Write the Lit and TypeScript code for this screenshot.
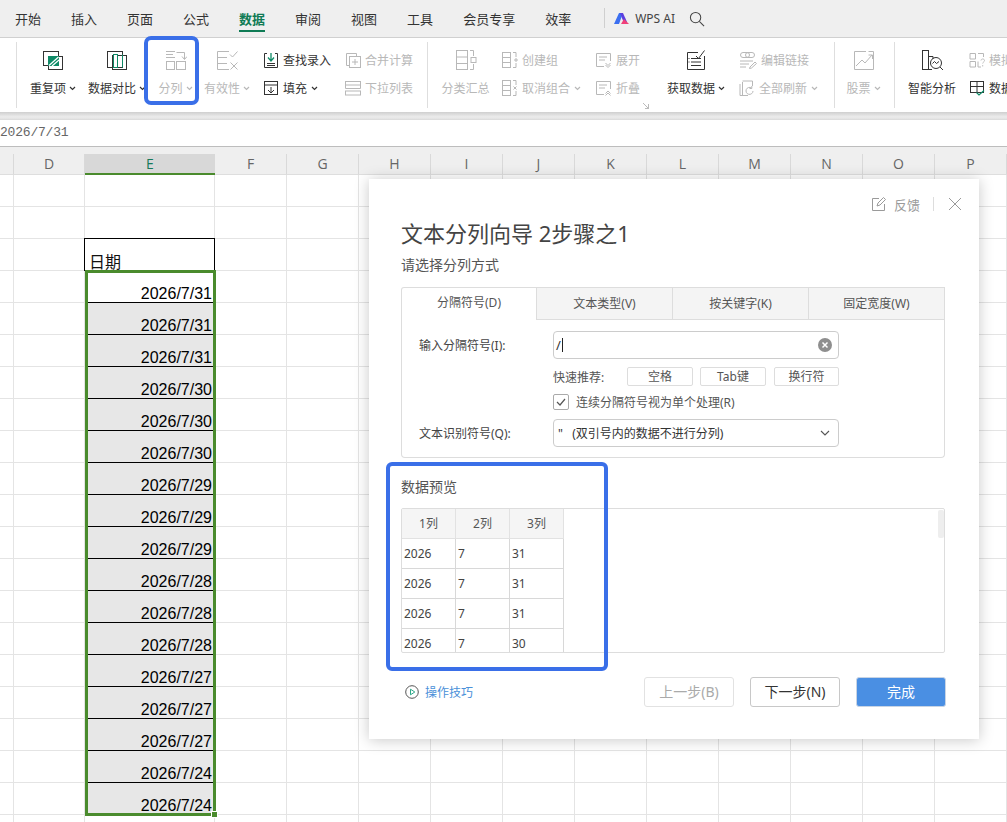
import { LitElement, html, css, svg, nothing } from "lit";
import { customElement } from "lit/decorators.js";

const G = "#0e8a66";

const ic = (size: number, body: unknown) =>
  html`<svg class="ic" width=${size} height=${size} viewBox="0 0 ${size} ${size}" fill="none" stroke="currentColor" stroke-width="1">${body}</svg>`;

const ICONS: Record<string, unknown> = {
  repeat: ic(22, svg`<rect x="1.5" y="2.5" width="15" height="14"/><rect x="6.5" y="7.5" width="14" height="13"/><rect x="6.5" y="7.5" width="10" height="9" fill="${G}" stroke="${G}"/><path d="M7 16.5L16.5 8M10 17L17 11" stroke="#fff" stroke-width="1.2"/>`),
  compare: ic(22, svg`<rect x="1.5" y="2.5" width="15" height="16"/><rect x="6.5" y="6.5" width="14" height="14"/><rect x="7.5" y="5.5" width="4" height="13" stroke="${G}" fill="#fff"/><path d="M16.5 5.5v13" stroke="${G}"/>`),
  split: ic(22, svg`<path d="M1 2.5H10M1 5.5H8M1 8.5H10M11.5 3.5H19.5V10"/><path d="M17 7.5L19.5 10.5L22 7.5"/><rect x="1.5" y="12.5" width="8" height="8"/><rect x="11.5" y="12.5" width="9" height="8"/>`),
  valid: ic(22, svg`<path d="M13 2.5H1.5V20.5H13M1.5 8.5H11M1.5 14.5H11"/><path d="M14 5.5L16.5 8L21.5 2.5"/><path d="M14.5 13.5L21.5 20.5M21.5 13.5L14.5 20.5"/>`),
  find: ic(16, svg`<path d="M4 1.5H1.5V15.5H14.5V1.5H12"/><path d="M4 11.5H12M4 13.5H12" stroke-width="1"/><path d="M8 1V8M5 5.5L8 9L11 5.5" stroke="${G}" stroke-width="1.3"/>`),
  fill: ic(16, svg`<rect x="1.5" y="1.5" width="13" height="13"/><path d="M1.5 5H14.5M8 7V13M5 10L8 13L11 10"/>`),
  merge: ic(16, svg`<path d="M4.5 13.5H1.5V1.5H11.5V4"/><rect x="4.5" y="4.5" width="11" height="11"/><path d="M10 7V13M7 10H13"/>`),
  drop: ic(16, svg`<rect x="0.5" y="1.5" width="15" height="3.5"/><path d="M0.5 5V8.5H15.5V5"/><rect x="0.5" y="11" width="15" height="4"/>`),
  subtotal: ic(22, svg`<rect x="1.5" y="1.5" width="11" height="19"/><path d="M1.5 8H12.5M1.5 14.5H12.5"/><path d="M15 1.5H18.5V7M18.5 15V20.5H15"/><rect x="16" y="8.5" width="5" height="5"/>`),
  group: ic(16, svg`<rect x="0.5" y="0.5" width="8" height="15"/><path d="M0.5 5.5H8.5M0.5 10.5H8.5M11 0.5H14V5M14 11V15.5H11"/><path d="M14 6V10M12 8H16"/>`),
  ungroup: ic(16, svg`<rect x="0.5" y="0.5" width="8" height="15"/><path d="M0.5 5.5H8.5M0.5 10.5H8.5M11 0.5H14V5M14 11V15.5H11"/><path d="M11.5 6.5L14.5 9.5M14.5 6.5L11.5 9.5"/>`),
  expand: ic(16, svg`<path d="M8 14.5H0.5V1.5H14.5V9"/><path d="M3 5H11M3 8H9"/><path d="M9.5 11L12 13.5L14.5 11M9.5 13L12 15.5L14.5 13"/>`),
  fold: ic(16, svg`<path d="M8 14.5H0.5V1.5H14.5V9"/><path d="M3 5H11M3 8H9"/><path d="M9.5 13.5L12 11L14.5 13.5M9.5 15.5L12 13L14.5 15.5"/>`),
  getdata: ic(22, svg`<path d="M13 3.5H2.5V20.5H19.5V7"/><path d="M6 9.5H16M6 13H16M6 16.5H16M3.5 9.5H4.5M3.5 13H4.5" /><path d="M11 7L13.5 9.5L19.5 1.5" stroke="#333"/>`),
  link: ic(18, svg`<rect x="1.5" y="1.5" width="9" height="5" rx="2.5"/><rect x="6.5" y="1.5" width="9" height="5" rx="2.5"/><path d="M1 10H14M1 13H10M1 16H7"/><path d="M11 16L16 11L17.5 12.5L12.5 17L10.5 17.5Z"/>`),
  refresh: ic(16, svg`<path d="M3.5 2V15.5M1 4V15.5H9M3.5 1H13.5V6"/><path d="M14 11A3.5 3.5 0 1 1 12.5 8M12.8 6V8.5H10.5"/>`),
  stock: ic(22, svg`<path d="M13 2.5H1.5V20.5H20.5V2.5H15.5"/><path d="M3 17L9 11L12 14L19 6"/><path d="M15.5 6H19.5V10" />`),
  smart: ic(22, svg`<rect x="1.5" y="1.5" width="6" height="19"/><path d="M7.5 7.5H12V10M7.5 20.5H11"/><circle cx="15" cy="14" r="5.5"/><path d="M11.5 14.5L13.5 12.5L15.5 14.5L18 12.5M19 18L22 21"/>`),
  sim: ic(16, svg`<path d="M1 1.5H6.5V7H1ZM9 1.5H14.5V5M1 9.5H6.5V15H1Z" stroke-dasharray="none"/><path d="M9 9.5V15H12"/><path d="M12 8.5C12 6.5 15.5 6.5 15.5 8.5C15.5 10 13.7 10 13.7 11.5M13.7 13V14.5" stroke-width="0.9"/>`),
  check: ic(16, svg`<rect x="1.5" y="1.5" width="13" height="11"/><path d="M1.5 6.5H14.5M8 1.5V12.5" /><path d="M7.5 12.5L10 15L15 10.5" stroke="${G}" stroke-width="1.2"/>`),
};

type Small = { i: string; t: string; arrow?: boolean; off?: boolean };
type Item =
  | { k: "sep" }
  | { k: "gap"; w: number }
  | { k: "big"; w: number; i: string; t: string; off?: boolean; arrow?: boolean }
  | { k: "small"; w: number; rows: Small[] };

const RIBBON: Item[] = [
  { k: "gap", w: 16 }, { k: "sep" }, { k: "gap", w: 9 },
  { k: "big", w: 54, i: "repeat", t: "重复项", arrow: true },
  { k: "gap", w: 5 },
  { k: "big", w: 64, i: "compare", t: "数据对比", arrow: true },
  { k: "gap", w: 1 },
  { k: "big", w: 51, i: "split", t: "分列", arrow: true, off: true },
  { k: "big", w: 52, i: "valid", t: "有效性", arrow: true, off: true },
  { k: "gap", w: 10 },
  { k: "small", w: 82, rows: [{ i: "find", t: "查找录入" }, { i: "fill", t: "填充", arrow: true }] },
  { k: "small", w: 82, rows: [{ i: "merge", t: "合并计算", off: true }, { i: "drop", t: "下拉列表", off: true }] },
  { k: "sep" }, { k: "gap", w: 6 },
  { k: "big", w: 63, i: "subtotal", t: "分类汇总", off: true },
  { k: "gap", w: 5 },
  { k: "small", w: 94, rows: [{ i: "group", t: "创建组", off: true }, { i: "ungroup", t: "取消组合", arrow: true, off: true }] },
  { k: "small", w: 66, rows: [{ i: "expand", t: "展开", off: true }, { i: "fold", t: "折叠", off: true }] },
  { k: "big", w: 68, i: "getdata", t: "获取数据", arrow: true },
  { k: "gap", w: 9 },
  { k: "small", w: 95, rows: [{ i: "link", t: "编辑链接", off: true }, { i: "refresh", t: "全部刷新", arrow: true, off: true }] },
  { k: "sep" },
  { k: "big", w: 57, i: "stock", t: "股票", arrow: true, off: true },
  { k: "gap", w: 2 }, { k: "sep" }, { k: "gap", w: 5 },
  { k: "big", w: 64, i: "smart", t: "智能分析" },
  { k: "gap", w: 5 },
  { k: "small", w: 60, rows: [{ i: "sim", t: "模拟", off: true }, { i: "check", t: "数据" }] },
];

const TABS = ["开始", "插入", "页面", "公式", "数据", "审阅", "视图", "工具", "会员专享", "效率"];
const COLS = ["", "D", "E", "F", "G", "H", "I", "J", "K", "L", "M", "N", "O", "P"];
const DATES = ["31", "31", "31", "30", "30", "30", "29", "29", "29", "28", "28", "28", "27", "27", "27", "24", "24"];
const PREVIEW = [["2026", "7", "31"], ["2026", "7", "31"], ["2026", "7", "31"], ["2026", "7", "30"]];

const chevron = html`<svg class="chev" width="7" height="5" viewBox="0 0 7 5" fill="none" stroke="currentColor" stroke-width="1.2"><path d="M1 1L3.5 3.5L6 1"/></svg>`;

@customElement("app-root")
export class AppRoot extends LitElement {
  static styles = css`
    :host { display: block; width: 1007px; height: 822px; position: relative; overflow: hidden; background: #fff;
      font-family: "Noto Sans", "Noto Sans CJK SC", sans-serif; font-size: 12px; color: #333; }
    * { box-sizing: border-box; }
    .tabs { height: 38px; background: #efefef; border-bottom: 1px solid #d0d0d0; display: flex; align-items: flex-start; padding-left: 15px; gap: 30px; font-size: 13px; color: #333; }
    .tab { height: 32px; line-height: 37px; font-family: "Noto Sans CJK SC", sans-serif; }
    .tab.on { color: #0f7b55; font-weight: 700; border-bottom: 2px solid #0f7b55; }
    .ai { display: flex; align-items: center; height: 37px; margin-left: 3px; gap: 6px; color: #444; font-size: 12px; }
    .vsep { width: 1px; height: 20px; background: #cfcfcf; margin-top: -1px; margin-right: 3px; }
    .search { margin-left: 8px; color: #444; }
    .ribbon { height: 74px; background: #fff; display: flex; padding-top: 8px; position: relative; overflow: hidden; white-space: nowrap; }
    .sep { width: 1px; height: 66px; margin-top: -4px; background: #dedede; flex: none; }
    .big, .small { flex: none; }
    .big { display: flex; flex-direction: column; align-items: center; }
    .off { color: #b8b8b8; }
    .bigic { height: 28px; display: flex; align-items: center; justify-content: center; }
    .lab { height: 28px; display: flex; align-items: center; gap: 3px; }
    .row { height: 28px; display: flex; align-items: center; gap: 4px; }
    .chev { margin-left: 0; flex: none; }
    .launch { position: absolute; left: 643px; top: 65px; color: #bbb; }
    .shade { height: 8px; background: linear-gradient(#cfcfcf, #ececec 70%, #e2e2e2); border-bottom: 1px solid #ddd; }
    .fx { height: 27px; background: #fff; border-bottom: 1px solid #bdbdbd; font-family: "Liberation Mono", monospace; font-size: 13px; letter-spacing: -0.2px; color: #666; line-height: 25px; }
    .grid { display: grid; grid-template-columns: 14px 71px 130px repeat(11, 72px); }
    .hd { background: #efefef; padding-top: 7px; }
    .hc { height: 21px; border-right: 1px solid #d9d9d9; border-bottom: 1px solid #dedede; text-align: center; font: 14px/20px "Open Sans", sans-serif; color: #666; }
    .hc.on { background: #d8d8d8; color: #17795a; border-bottom: 2px solid #4a8b2d; border-right: none; }
    .c { height: 32px; border-right: 1px solid #e4e4e4; border-bottom: 1px solid #e4e4e4; }
    .c.h { border-right-color: #000; box-shadow: -1px 0 0 #000, 0 -1px 0 #000, -1px -1px 0 #000; font: 16px/18px "Noto Sans CJK SC", sans-serif; color: #111; padding: 13px 0 0 4px; }
    .c.d { border-bottom-color: #000; text-align: right; padding: 14px 2px 0 0; font: 16px/17px "Liberation Sans", sans-serif; color: #000; }
    .c.gray { background: #e7e7e7; }
    .sel { position: absolute; left: 85px; top: 270px; width: 131px; height: 546px; border: 3px solid #4a8b2d; }
    .sel i { position: absolute; right: -5px; bottom: -5px; width: 7px; height: 7px; background: #4a8b2d; border: 1px solid #fff; }
    .hl { position: absolute; border: 4px solid #3a6fe8; }
    .hl.a { left: 144px; top: 36px; width: 55px; height: 69px; border-radius: 7px; }
    .hl.b { left: 386px; top: 462px; width: 222px; height: 209px; border-radius: 6px; }
    .dialog { position: absolute; left: 369px; top: 179px; width: 610px; height: 560px; background: #fff; box-shadow: 0 1px 14px rgba(0,0,0,.22); padding: 15px 34px 0 32px; color: #444; }
    .top { display: flex; justify-content: flex-end; align-items: center; height: 20px; margin-right: -17px; color: #9a9a9a; font-size: 13px; gap: 7px; font-family: "Noto Sans CJK SC", sans-serif; }
    .bar { width: 1px; height: 14px; background: #ddd; margin: 0 7px 0 6px; }
    h1 { margin: 4px 0 0; font-size: 22px; line-height: 30px; font-weight: 400; color: #444; }
    .sub { margin-top: 7px; font-size: 14px; line-height: 20px; color: #555; }
    .dtabs { margin-top: 12px; display: grid; grid-template-columns: repeat(4, 136px); height: 32px; }
    .dt { background: #f4f4f4; border: 1px solid #ddd; border-left: none; text-align: center; line-height: 31px; color: #555; }
    .dt.on { background: #fff; border-left: 1px solid #ddd; border-bottom: none; border-radius: 3px 0 0 0; line-height: 30px; }
    .panel { height: 139px; border: 1px solid #ddd; border-top: none; border-radius: 0 0 4px 4px; padding: 12px 0 0 17px; position: relative; }
    .fr { display: grid; grid-template-columns: 134px 286px; align-items: center; }
    .inp { height: 28px; border: 1px solid #ccc; border-radius: 4px; display: flex; align-items: center; justify-content: space-between; padding: 0 6px 0 2px; color: #333; font-size: 13px; }
    .caret { display: inline-block; width: 1px; height: 14px; background: #222; vertical-align: -2px; margin-left: 1px; }
    .quick { margin-top: 8px; display: flex; align-items: center; height: 19px; color: #555; white-space: nowrap; }
    .quick span { flex: none; width: 51px; }
    .qb { height: 19px; border: 1px solid #ddd; border-radius: 2px; text-align: center; line-height: 17px; width: 66px; color: #555; flex: none; }
    .qgap { margin-left: 7px; }
    .qb.last { width: 65px; margin-left: 8px; }
    .first { margin-left: 23px; }
    .ck { margin-top: 8px; height: 16px; display: flex; align-items: center; gap: 7px; color: #555; }
    .box { width: 16px; height: 16px; border: 1px solid #aaa; border-radius: 2px; display: flex; align-items: center; justify-content: center; }
    .sel2 { margin-top: 9px; }
    .seltext { font-size: 12px; padding-left: 2px; }
    .selchev { margin-right: 2px; }
    .plab { margin-top: 19px; font-size: 14px; line-height: 20px; color: #555; }
    .pv { margin-top: 11px; width: 544px; height: 145px; border: 1px solid #ddd; border-left: 1px solid #ddd; border-radius: 2px; position: relative; overflow: hidden; }
    .tbl { display: grid; grid-template-columns: repeat(3, 54px); width: 162px; }
    .tc { height: 30px; border-right: 1px solid #d8d8d8; border-bottom: 1px solid #d8d8d8; line-height: 29px; padding-left: 2px; color: #444; }
    .tc.th { background: #f5f5f5; text-align: center; padding: 0; line-height: 29px; color: #555; border-color: #e2e2e2; }
    .thumb { position: absolute; right: 0; top: 1px; width: 6px; height: 28px; background: #eee; border-radius: 2px; }
    .foot { margin-top: 24px; margin-right: -1px; display: flex; align-items: center; height: 30px; }
    .tip { display: flex; align-items: center; gap: 6px; color: #4a90d9; margin-left: 4px; margin-right: auto; margin-top: 0; }
    .btn { width: 90px; height: 30px; border: 1px solid #c8c8c8; border-radius: 3px; text-align: center; line-height: 28px; font-size: 14px; color: #333; margin-left: 16px; }
    .btn.dis { color: #aaa; border-color: #e2e2e2; }
    .btn.pri { background: #4a8fe3; color: #fff; border-color: #c8d4e4; }
  `;

  private item(it: Item) {
    if (it.k === "sep") return html`<div class="sep"></div>`;
    if (it.k === "gap") return html`<div style="flex:none;width:${it.w}px"></div>`;
    if (it.k === "big")
      return html`<div class="big ${it.off ? "off" : ""}" style="width:${it.w}px">
        <div class="bigic">${ICONS[it.i]}</div>
        <div class="lab">${it.t}${it.arrow ? chevron : nothing}</div>
      </div>`;
    return html`<div class="small" style="width:${it.w}px">
      ${it.rows.map(
        (r) => html`<div class="row ${r.off ? "off" : ""}">${ICONS[r.i]}<span>${r.t}</span>${r.arrow ? chevron : nothing}</div>`
      )}
    </div>`;
  }

  render() {
    return html`
      <div class="tabs">
        ${TABS.map((t) => html`<div class="tab ${t === "数据" ? "on" : ""}">${t}</div>`)}
        <div class="ai">
          <div class="vsep"></div>
          <svg width="15" height="11" viewBox="0 0 15 11"><path d="M0 11L5 0H9L5 11Z" fill="#3b6ff0"/><path d="M6 0H9L13 9H9.5Z" fill="#5b3fe0"/><path d="M7 11L10 6L15 11Z" fill="#f0407a"/></svg>
          <span>WPS AI</span>
          <svg class="search" width="16" height="16" viewBox="0 0 17 17" fill="none" stroke="currentColor" stroke-width="1.1"><circle cx="7" cy="7" r="5.5"/><path d="M11 11L16 16"/></svg>
        </div>
      </div>
      <div class="ribbon">
        ${RIBBON.map((it) => this.item(it))}
        <svg class="launch" width="6" height="6" viewBox="0 0 6 6" fill="none" stroke="currentColor"><path d="M0 .5H1M5.5 1V6M1 1L5 5M2 5.5H6"/></svg>
      </div>
      <div class="shade"></div>
      <div class="fx">2026/7/31</div>
      <div class="grid hd">
        ${COLS.map((c) => html`<div class="hc ${c === "E" ? "on" : ""}">${c}</div>`)}
      </div>
      <div class="grid">${this.cells()}</div>

      <div class="sel"><i></i></div>

      <div class="dialog">
        <div class="top">
          <svg width="16" height="16" viewBox="0 0 16 16" fill="none" stroke="currentColor"><path d="M8 2.5H1.5V14.5H13.5V8"/><path d="M6 10L7 7L12.5 1.5L14.5 3.5L9 9Z"/></svg>
          <span>反馈</span>
          <div class="bar"></div>
          <svg width="14" height="14" viewBox="0 0 14 14" fill="none" stroke="currentColor" stroke-width="1"><path d="M1 1L13 13M13 1L1 13"/></svg>
        </div>
        <h1>文本分列向导 2步骤之1</h1>
        <div class="sub">请选择分列方式</div>
        <div class="dtabs">
          <div class="dt on">分隔符号(D)</div>
          <div class="dt">文本类型(V)</div>
          <div class="dt">按关键字(K)</div>
          <div class="dt">固定宽度(W)</div>
        </div>
        <div class="panel">
          <div class="fr">
            <span>输入分隔符号(I):</span>
            <div class="inp">
              <span>/<i class="caret"></i></span>
              <svg width="14" height="14" viewBox="0 0 14 14"><circle cx="7" cy="7" r="7" fill="#8e8e8e"/><path d="M4.5 4.5L9.5 9.5M9.5 4.5L4.5 9.5" stroke="#fff" stroke-width="1.5"/></svg>
            </div>
          </div>
          <div class="fr">
            <span></span>
            <div class="quick">
              <span>快速推荐:</span>
              <div class="qb first">空格</div>
              <div class="qb qgap">Tab键</div>
              <div class="qb last">换行符</div>
            </div>
          </div>
          <div class="fr">
            <span></span>
            <div class="ck">
              <div class="box"><svg width="10" height="8" viewBox="0 0 10 8" fill="none" stroke="#555" stroke-width="1.2"><path d="M1 4L4 7L9 1"/></svg></div>
              <span>连续分隔符号视为单个处理(R)</span>
            </div>
          </div>
          <div class="fr sel2">
            <span>文本识别符号(Q):</span>
            <div class="inp">
              <span class="seltext">"\u00a0\u00a0\u00a0(双引号内的数据不进行分列)</span>
              <svg class="selchev" width="10" height="6" viewBox="0 0 10 6" fill="none" stroke="#555" stroke-width="1.1"><path d="M1 1L5 5L9 1"/></svg>
            </div>
          </div>
        </div>
        <div class="plab">数据预览</div>
        <div class="pv">
          <div class="tbl">
            ${["1列", "2列", "3列"].map((h) => html`<div class="tc th">${h}</div>`)}
            ${PREVIEW.flat().map((v) => html`<div class="tc">${v}</div>`)}
          </div>
          <div class="thumb"></div>
        </div>
        <div class="foot">
          <div class="tip">
            <svg width="14" height="14" viewBox="0 0 14 14" fill="none"><circle cx="7" cy="7" r="6.3" stroke="#555"/><path d="M5.5 4.2V9.8L9.8 7Z" stroke="#2fa98a"/></svg>
            <span>操作技巧</span>
          </div>
          <div class="btn dis">上一步(B)</div>
          <div class="btn">下一步(N)</div>
          <div class="btn pri">完成</div>
        </div>
      </div>

      <div class="hl a"></div>
      <div class="hl b"></div>
    `;
  }

  private cells() {
    const out: unknown[] = [];
    for (let r = 0; r < 21; r++) {
      for (let c = 0; c < 14; c++) {
        if (c === 2 && r === 2) out.push(html`<div class="c h">日期</div>`);
        else if (c === 2 && r >= 3 && r < 20)
          out.push(html`<div class="c d ${r > 3 ? "gray" : ""}">2026/7/${DATES[r - 3]}</div>`);
        else out.push(html`<div class="c"></div>`);
      }
    }
    return out;
  }
}
